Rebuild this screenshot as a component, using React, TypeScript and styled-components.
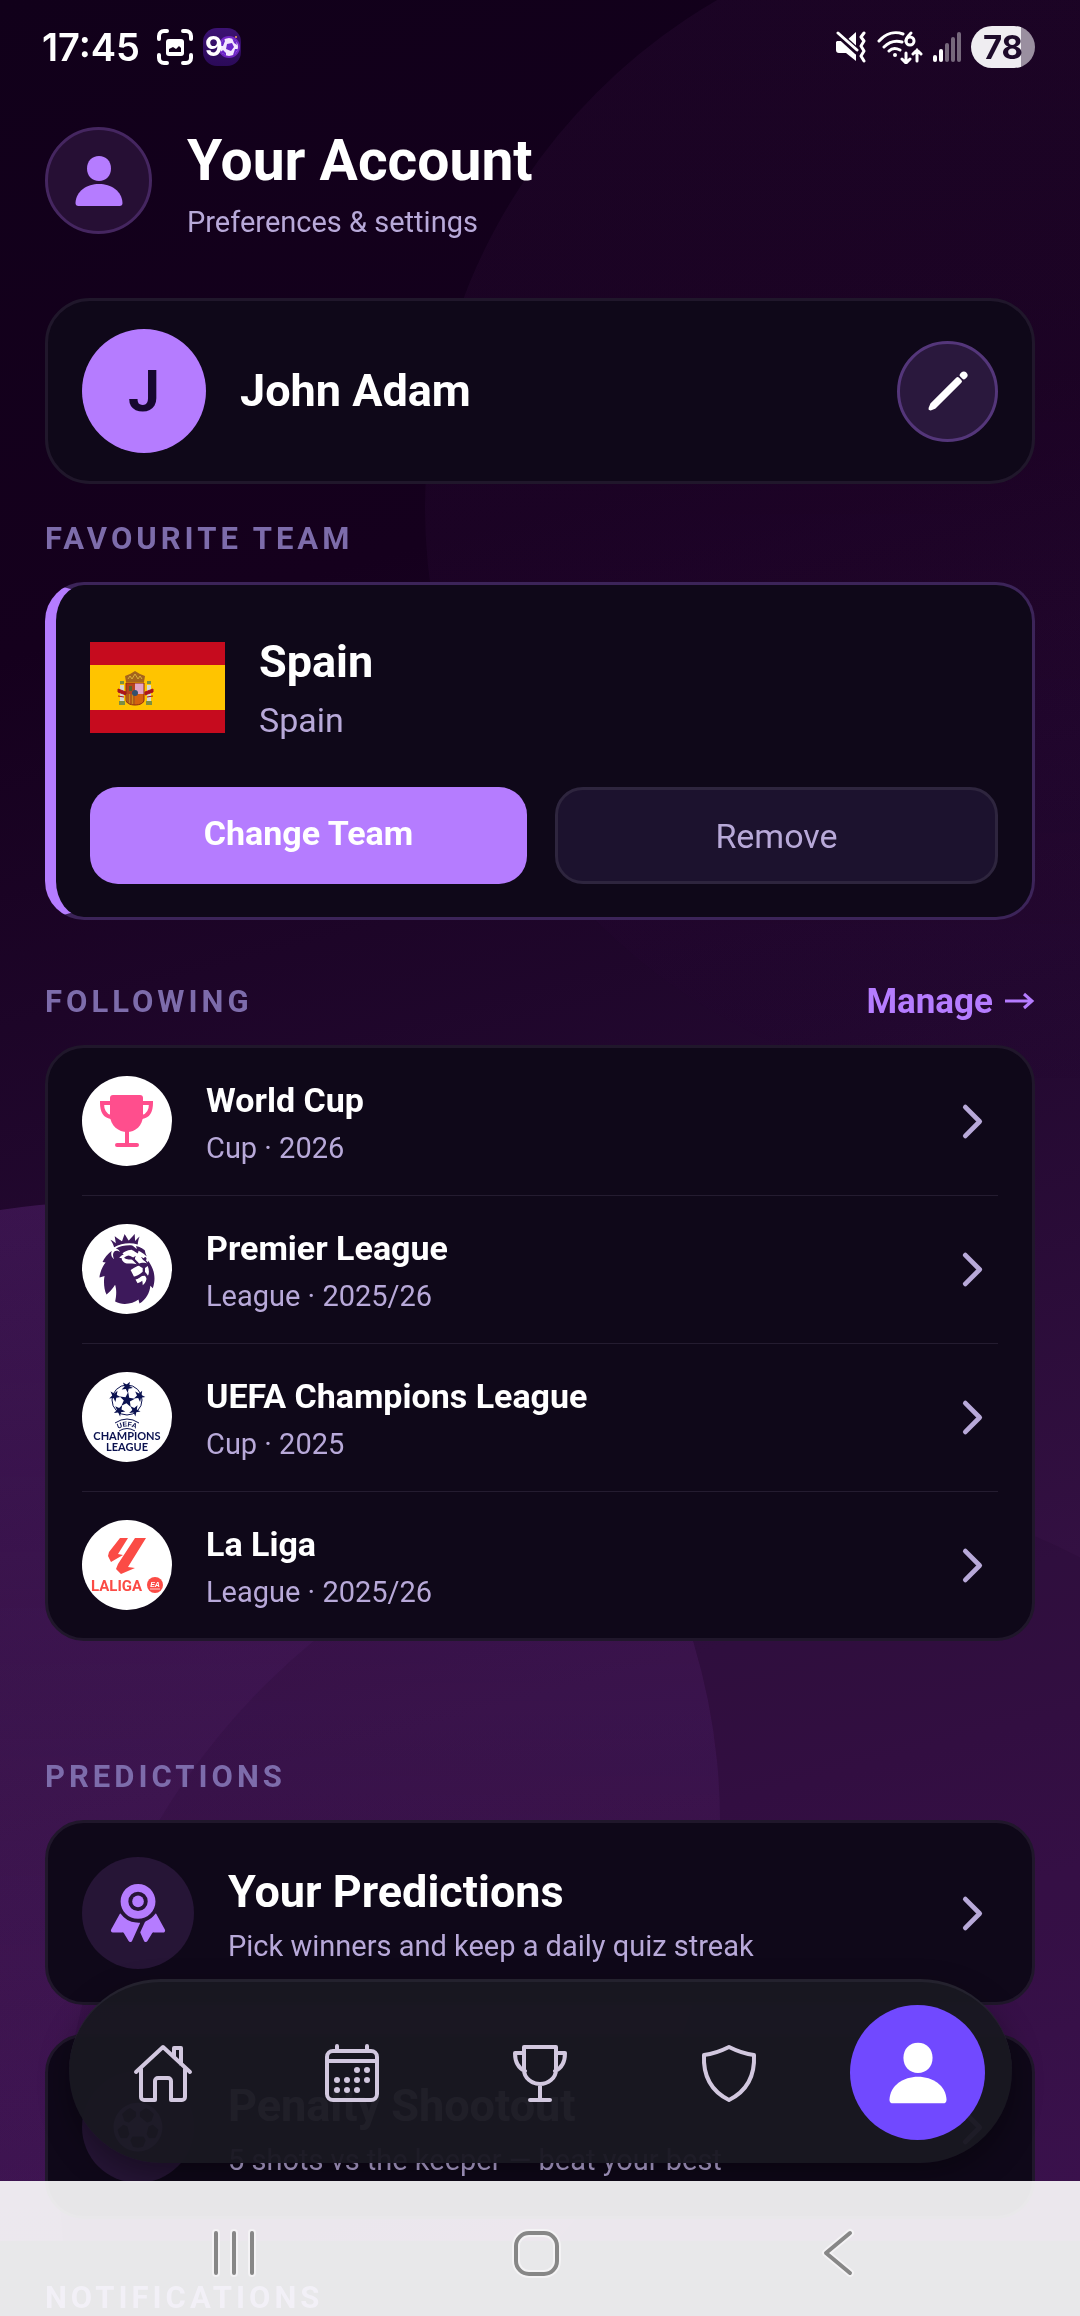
import React from 'react';
import { IoChevronForward, IoFootball, IoPencil, IoRibbon } from 'react-icons/io5';
import { SiPremierleague } from 'react-icons/si';
import styled, { createGlobalStyle } from 'styled-components';

interface Competition {
  name: string;
  detail: string;
  logo: React.ReactNode;
}

const competitions: Competition[] = [
  { name: 'World Cup', detail: 'Cup · 2026', logo: <CupLogo /> },
  { name: 'Premier League', detail: 'League · 2025/26', logo: <SiPremierleague size={70} color="#3d195b" /> },
  { name: 'UEFA Champions League', detail: 'Cup · 2025', logo: <ChampionsLogo /> },
  { name: 'La Liga', detail: 'League · 2025/26', logo: <LaLigaLogo /> },
];

const games = [
  { name: 'Your Predictions', detail: 'Pick winners and keep a daily quiz streak', icon: <IoRibbon size={62} /> },
  { name: 'Penalty Shootout', detail: '5 shots vs the keeper — beat your best', icon: <IoFootball size={60} /> },
];

const tabs = [
  { label: 'Home', icon: <HomeIcon /> },
  { label: 'Fixtures', icon: <CalendarIcon /> },
  { label: 'Competitions', icon: <TrophyIcon /> },
  { label: 'Teams', icon: <ShieldIcon /> },
  { label: 'Account', icon: <PersonIcon size={68} />, active: true },
];

export default function App() {
  return (
    <Page>
      <GlobalStyle />
      <Backdrop />
      <BottomShade />

      <StatusBar />

      <Content>
        <Header>
          <HeaderBadge><PersonIcon size={56} /></HeaderBadge>
          <div>
            <PageTitle>Your Account</PageTitle>
            <Detail>Preferences &amp; settings</Detail>
          </div>
        </Header>

        <ProfileCard>
          <Avatar>J</Avatar>
          <CardTitle>John Adam</CardTitle>
          <EditButton type="button" aria-label="Edit profile"><IoPencil size={48} /></EditButton>
        </ProfileCard>

        <SectionHead $space={36}>
          <SectionLabel>FAVOURITE TEAM</SectionLabel>
        </SectionHead>
        <TeamCard>
          <TeamRow>
            <SpainFlag />
            <div>
              <CardTitle>Spain</CardTitle>
              <TeamDetail>Spain</TeamDetail>
            </div>
          </TeamRow>
          <TeamActions>
            <PrimaryButton type="button">Change Team</PrimaryButton>
            <SecondaryButton type="button">Remove</SecondaryButton>
          </TeamActions>
        </TeamCard>

        <SectionHead $space={63}>
          <SectionLabel>FOLLOWING</SectionLabel>
          <ManageLink href="#manage">Manage <ArrowIcon /></ManageLink>
        </SectionHead>
        <ListCard>
          {competitions.map((item) => (
            <CompetitionRow key={item.name} href="#competition">
              <Logo>{item.logo}</Logo>
              <RowText>
                <RowTitle>{item.name}</RowTitle>
                <Detail>{item.detail}</Detail>
              </RowText>
              <IoChevronForward size={51} />
            </CompetitionRow>
          ))}
        </ListCard>

        <SectionHead $space={117}>
          <SectionLabel>PREDICTIONS</SectionLabel>
        </SectionHead>
        <GameList>
          {games.map((game) => (
            <GameCard key={game.name} href="#game">
              <GameIcon>{game.icon}</GameIcon>
              <RowText>
                <CardTitle>{game.name}</CardTitle>
                <Detail>{game.detail}</Detail>
              </RowText>
              <IoChevronForward size={51} />
            </GameCard>
          ))}
        </GameList>

        <SectionHead $space={60}>
          <SectionLabel>NOTIFICATIONS</SectionLabel>
        </SectionHead>
      </Content>

      <TabBar>
        {tabs.map((tab) => (
          <Tab key={tab.label} href="#tab" aria-label={tab.label}>
            <TabIcon $active={tab.active}>{tab.icon}</TabIcon>
          </Tab>
        ))}
      </TabBar>

      <SystemBar />
    </Page>
  );
}

function StatusBar() {
  return (
    <StatusRow>
      <Clock>17:45</Clock>
      <svg width="36" height="36" viewBox="0 0 36 36" fill="none" stroke="#fff" strokeWidth="4" strokeLinecap="round">
        <path d="M2 10V7a5 5 0 0 1 5-5h3M26 2h3a5 5 0 0 1 5 5v3M34 26v3a5 5 0 0 1-5 5h-3M10 34H7a5 5 0 0 1-5-5v-3" />
        <rect x="9" y="10" width="18" height="17" rx="3" fill="#fff" stroke="none" />
        <path d="M12 23v-3l4-2 3 2 3-3 2 2v4z" fill="#12001a" stroke="none" />
      </svg>
      <AppBadge>
        <svg width="38" height="38" viewBox="0 0 38 38">
          <circle cx="26" cy="19" r="11" fill="#9a35ff" opacity=".6" />
          <circle cx="26" cy="19" r="9" fill="#f3e6ff" />
          <path d="M24 16l5-1 2 4-3 4-5-2zM18 15l3-4 1 2-2 5h-2zM29 10l4 3 1 4-3-2zM20 22l3 3v3l-5-4zM32 21h3l-3 5-2 1z" fill="#6a25c9" />
          <circle cx="33" cy="9" r="1" fill="#f0a35a" />
          <text x="2" y="28" fontFamily="Inter, sans-serif" fontWeight="700" fontSize="27" fill="#fff">9</text>
        </svg>
      </AppBadge>
      <StatusSpacer />
      <svg width="32" height="32" viewBox="0 0 32 32">
        <path d="M2 10h9l10-9v29l-10-8H4a3 3 0 0 1-3-3v-8z" fill="#fff" />
        <path d="M1 1l22 20" stroke="#1a0422" strokeWidth="7" />
        <path d="M3 2l19 17" stroke="#fff" strokeWidth="3" strokeLinecap="round" />
        <path d="M29 2l-3 4 3 4-3 5 3 5-3 5 3 5" fill="none" stroke="#fff" strokeWidth="3" strokeLinecap="round" strokeLinejoin="round" />
      </svg>
      <svg width="46" height="34" viewBox="0 0 46 34" fill="none" stroke="#fff" strokeWidth="3" strokeLinecap="round">
        <path d="M2 11C9 3 18 1 26 4M7 17c5-5 11-7 18-5M12 21c3-3 7-3 11-1" />
        <circle cx="18" cy="25" r="2" fill="#fff" stroke="none" />
        <path d="M34 3c-3 3-5 5-5 8" />
        <circle cx="33" cy="11" r="4" />
        <path d="M29 23v10M25 29l4 4 4-4M40 31V20M36 24l4-4 4 4" />
      </svg>
      <svg width="28" height="30" viewBox="0 0 28 30" fill="#fff">
        <rect x="0" y="23" width="4" height="7" rx="2" />
        <rect x="6" y="17" width="4" height="13" rx="2" />
        <g opacity=".4">
          <rect x="12" y="11" width="4" height="19" rx="2" />
          <rect x="18" y="5" width="4" height="25" rx="2" />
          <rect x="24" y="0" width="4" height="30" rx="2" />
        </g>
      </svg>
      <Battery>78</Battery>
    </StatusRow>
  );
}

function SystemBar() {
  return (
    <SystemNav>
      <SystemButton type="button" aria-label="Recents">
        <SystemGlyph><path d="M10 5v40M28 5v40M46 5v40" /></SystemGlyph>
      </SystemButton>
      <SystemButton type="button" aria-label="Home">
        <SystemGlyph><rect x="8" y="5" width="41" height="41" rx="13" /></SystemGlyph>
      </SystemButton>
      <SystemButton type="button" aria-label="Back">
        <SystemGlyph><path d="M40 5L16 25l24 20" /></SystemGlyph>
      </SystemButton>
    </SystemNav>
  );
}

function SystemGlyph({ children }: { children: React.ReactNode }) {
  return (
    <svg width="56" height="50" viewBox="0 0 56 50" fill="none" strokeLinecap="round" strokeLinejoin="round">
      <g stroke="#f4f3f5" strokeWidth="8">{children}</g>
      <g stroke="#878787" strokeWidth="4">{children}</g>
    </svg>
  );
}

function Backdrop() {
  return (
    <BackdropLayer aria-hidden="true">
      <svg width="100%" height="100%" viewBox="0 0 1080 2316" preserveAspectRatio="none">
        <defs>
          <linearGradient id="topGlow" x1="0" y1="0" x2="0" y2="1">
            <stop offset="0" stopColor="#7d2d92" stopOpacity=".09" />
            <stop offset=".6" stopColor="#7d2d92" stopOpacity=".06" />
            <stop offset="1" stopColor="#7d2d92" stopOpacity="0" />
          </linearGradient>
          <linearGradient id="lowGlow" x1="0" y1="0" x2="0" y2="1">
            <stop offset="0" stopColor="#8a3cb4" stopOpacity=".24" />
            <stop offset=".5" stopColor="#8a3cb4" stopOpacity=".11" />
            <stop offset="1" stopColor="#8a3cb4" stopOpacity=".04" />
          </linearGradient>
        </defs>
        <circle cx="1011" cy="507" r="586" fill="url(#topGlow)" />
        <circle cx="100" cy="1822" r="620" fill="url(#lowGlow)" />
        <circle cx="760" cy="2180" r="700" fill="#1a0020" fillOpacity=".12" />
      </svg>
    </BackdropLayer>
  );
}

function ArrowIcon() {
  return (
    <svg width="32" height="18" viewBox="0 0 32 18" fill="none" stroke="currentColor" strokeWidth="3">
      <path d="M2 9h27M21 2l8 7-8 7" />
    </svg>
  );
}

function PersonIcon({ size }: { size: number }) {
  return (
    <svg width={size} height={size} viewBox="0 0 56 56" fill="currentColor">
      <path d="M28 3c7 0 12 5 12 12.500S35 28 28 28s-12-5-12-12.500S21 3 28 3z" />
      <path d="M28 31c12 0 23 7 23.500 19 0 2-1 3-3 3h-41c-2 0-3-1-3-3C5 38 16 31 28 31z" />
    </svg>
  );
}

function HomeIcon() {
  return (
    <LineSvg width="60" height="60" viewBox="0 0 60 60">
      <path d="M3 29L30 4l27 25M8 26v28a3 3 0 0 0 3 3h11V38a3 3 0 0 1 3-3h10a3 3 0 0 1 3 3v19h11a3 3 0 0 0 3-3V26M41 13V5h7v16" />
    </LineSvg>
  );
}

function CalendarIcon() {
  const dots = [[34, 27], [44, 27], [14, 37], [24, 37], [34, 37], [44, 37], [14, 47], [24, 47], [34, 47]];
  return (
    <LineSvg width="58" height="60" viewBox="0 0 58 60">
      <rect x="4" y="8" width="50" height="49" rx="6" />
      <path d="M4 18h50M14 3v4M44 3v4" />
      {dots.map(([x, y]) => <circle key={`${x}-${y}`} cx={x} cy={y} r="3" fill="currentColor" stroke="none" />)}
    </LineSvg>
  );
}

function TrophyIcon() {
  return (
    <LineSvg width="58" height="60" viewBox="0 0 58 60">
      <path d="M13 4h32v23c0 8-8 14-16 14s-16-6-16-14zM13 10H4c0 9 3 15 10 18M45 10h9c0 9-3 15-10 18M29 41v15M19 57h20" />
    </LineSvg>
  );
}

function ShieldIcon() {
  return (
    <LineSvg width="58" height="60" viewBox="0 0 58 60">
      <path d="M29 4c8 4 16 7 25 8 1 20-7 36-25 45C11 48 3 32 4 12c9-1 17-4 25-8z" />
    </LineSvg>
  );
}

function CupLogo() {
  return (
    <svg width="90" height="90" viewBox="0 0 90 90" fill="none" stroke="#ff4e8d" strokeWidth="4" strokeLinecap="round">
      <path d="M31 19h27a3 3 0 0 1 3 3v17c0 11-8 17-16 17s-17-6-17-17V22a3 3 0 0 1 3-3z" fill="#ff4e8d" stroke="none" />
      <path d="M28 27h-8c0 8 3 13 9 14M61 27h8c0 8-3 13-9 14M45 55v13M35 69h20" />
    </svg>
  );
}

function starPath(cx: number, cy: number, outer: number, turn: number) {
  const points = [];
  for (let i = 0; i < 10; i++) {
    const r = i % 2 ? outer * 0.4 : outer;
    const a = turn + (i * Math.PI) / 5;
    points.push(`${(cx + r * Math.sin(a)).toFixed(1)},${(cy - r * Math.cos(a)).toFixed(1)}`);
  }
  return `M${points.join('L')}Z`;
}

function ChampionsLogo() {
  const ring = [0, 1, 2, 3, 4].map((i) => (i * 2 * Math.PI) / 5);
  return (
    <svg width="90" height="90" viewBox="0 0 90 90" fill="#0b1250" fontWeight="700" textAnchor="middle">
      <circle cx="45" cy="28" r="15" fill="none" stroke="#0b1250" strokeWidth="1" />
      <path d={starPath(45, 28, 8, 0.15)} />
      {ring.map((a) => (
        <path key={a} d={starPath(45 + 13 * Math.sin(a), 28 - 13 * Math.cos(a), 6, a + 0.5)} />
      ))}
      <path id="uefaArc" d="M34 58Q45 51 56 58" fill="none" />
      <path d="M33 51Q45 43 57 51M37 59Q45 54 53 59" fill="none" stroke="#0b1250" strokeWidth="1" />
      <text fontFamily="Liberation Sans, sans-serif" fontSize="7">
        <textPath href="#uefaArc" startOffset="50%">UEFA</textPath>
      </text>
      <text x="45" y="68" fontFamily="Lato, sans-serif" fontSize="11">CHAMPIONS</text>
      <text x="45" y="79" fontFamily="Lato, sans-serif" fontSize="11">LEAGUE</text>
    </svg>
  );
}

function LaLigaLogo() {
  return (
    <svg width="90" height="90" viewBox="0 0 90 90" fill="#fb4b45" fontWeight="700">
      <path d="M38 18h8L36 34l5 1-12 7-3-6 1-4z" />
      <path d="M53 18h11L46 47l7 1-14 6-5-5 2-5z" />
      <text x="9" y="71" fontFamily="Roboto, sans-serif" fontSize="15">LALIGA</text>
      <circle cx="73" cy="65" r="8" />
      <text x="73" y="67" fontFamily="Liberation Sans, sans-serif" fontStyle="italic" fontSize="7" fill="#fff" textAnchor="middle">EA</text>
      <path d="M68 69h10" stroke="#fff" strokeWidth="1" opacity=".7" />
    </svg>
  );
}

function SpainFlag() {
  return (
    <svg width="135" height="91" viewBox="0 0 135 91" role="img" aria-label="Flag of Spain">
      <path d="M0 0h135v91H0z" fill="#c60b1e" />
      <path d="M0 23h135v45H0z" fill="#ffc400" />
      <path d="M30 43h4v16h-4zM57 43h4v16h-4z" fill="#d5d8d0" />
      <path d="M29 59h6v4h-6zM56 59h6v4h-6zM30 39h4v3h-4zM57 39h4v3h-4z" fill="#7c8f42" />
      <path d="M28 47l8 3v3l-8-3zM63 47l-8 3v3l8-3zM28 54l6 1M63 54l-6 1" fill="#ad1519" stroke="#ad1519" />
      <path d="M36 41h9v11h-9z" fill="#b8431d" />
      <path d="M45 41h9v11h-9z" fill="#e3a5c4" />
      <path d="M36 52h9v11c-5 0-9-2-9-5z" fill="#c98a1b" />
      <path d="M45 52h9v6c0 3-4 5-9 5z" fill="#d4610f" />
      <path d="M36 41h18v17c0 3-4 5-9 5s-9-2-9-5z" fill="none" stroke="#8d2a12" />
      <path d="M38 52v9M41 52v10M44 52v11" stroke="#9c2b12" />
      <path d="M39 44h3v5h-3z" fill="#54632b" />
      <circle cx="45" cy="51" r="3" fill="#35506e" />
      <path d="M36 40l-1-6 5-2 5-3 5 3 5 2-1 6z" fill="#a5641c" />
      <path d="M38 37l2-3 2 3 3-5 3 5 2-3 2 3" stroke="#d8b13a" fill="none" />
    </svg>
  );
}

const GlobalStyle = createGlobalStyle`
  * {
    box-sizing: border-box;
  }

  body {
    margin: 0;
    background: #12001a;
    color: #fff;
    font-family: Roboto, "Liberation Sans", sans-serif;
  }

  a {
    color: inherit;
    text-decoration: none;
  }

  button {
    font-family: inherit;
    cursor: pointer;
  }

  svg {
    display: block;
    flex-shrink: 0;
  }
`;

const Page = styled.div`
  position: relative;
  min-height: 100vh;
  overflow: hidden;
  background: linear-gradient(165deg, #11001a 0%, #15001d 25%, #22082f 48%, #331042 70%, #421556 100%);
`;

const BackdropLayer = styled.div`
  position: fixed;
  inset: 0;
`;

const BottomShade = styled.div`
  position: fixed;
  right: 0;
  bottom: 0;
  left: 0;
  height: 75px;
  background: #17162a;
`;

const StatusRow = styled.header`
  position: relative;
  display: flex;
  align-items: center;
  height: 94px;
  padding: 0 45px 0 42px;
`;

const Clock = styled.span`
  margin-right: 17px;
  font-family: Inter, sans-serif;
  font-size: 38px;
  font-weight: 600;
`;

const AppBadge = styled.span`
  margin-left: 10px;
  overflow: hidden;
  border-radius: 14px;
  background: linear-gradient(#3c1273, #2b0a58);
`;

const StatusSpacer = styled.span`
  flex: 1;

  & ~ svg {
    margin-right: 10px;
  }
`;

const Battery = styled.span`
  width: 64px;
  border-radius: 21px;
  background: linear-gradient(90deg, #efedf1 78%, #9a8fa0 78%);
  color: #1e0b2b;
  font-family: Inter, sans-serif;
  font-size: 33px;
  font-weight: 700;
  line-height: 42px;
  text-align: center;
`;

const Content = styled.main`
  position: relative;
  padding: 33px 45px 0;
`;

const Header = styled.div`
  display: flex;
  align-items: flex-start;
  gap: 35px;
  height: 171px;
`;

const Circle = styled.span`
  display: flex;
  flex-shrink: 0;
  align-items: center;
  justify-content: center;
  border-radius: 50%;
`;

const HeaderBadge = styled(Circle)`
  width: 107px;
  height: 107px;
  border: 3px solid #452660;
  background: #260f34;
  color: #b57cff;
`;

const PageTitle = styled.h1`
  margin: 0 0 10px;
  font-size: 57px;
  font-weight: 700;
  line-height: 68px;
`;

const CardTitle = styled.h2`
  margin: 0;
  font-size: 45px;
  font-weight: 700;
  line-height: 56px;
`;

const Detail = styled.p`
  margin: 0;
  color: #b8a9d9;
  font-size: 29px;
  line-height: 34px;
`;

const Card = styled.section`
  border: 3px solid #20172b;
  border-radius: 45px;
  background: #0f0819;
`;

const ProfileCard = styled(Card)`
  display: flex;
  align-items: center;
  gap: 34px;
  padding: 28px 34px;
`;

const Avatar = styled(Circle)`
  width: 124px;
  height: 124px;
  background: #b57cff;
  color: #170830;
  font-size: 57px;
  font-weight: 700;
`;

const EditButton = styled.button`
  display: flex;
  align-items: center;
  justify-content: center;
  width: 101px;
  height: 101px;
  margin-left: auto;
  padding: 0;
  border: 3px solid #54367a;
  border-radius: 50%;
  background: #2a183d;
  color: #fff;
`;

const SectionHead = styled.div<{ $space: number }>`
  display: flex;
  align-items: center;
  justify-content: space-between;
  height: 36px;
  margin-top: ${(props) => props.$space}px;
  margin-bottom: 26px;
`;

const SectionLabel = styled.h3`
  margin: 0;
  color: #7d6cab;
  font-size: 31px;
  font-weight: 700;
  letter-spacing: 4px;
`;

const ManageLink = styled.a`
  display: flex;
  align-items: center;
  gap: 10px;
  color: #b57cff;
  font-size: 35px;
  font-weight: 700;
`;

const TeamCard = styled(Card)`
  padding: 49px 34px 33px;
  border-color: #3c2459;
  border-left: 11px solid #b57cff;
  border-radius: 39px;
`;

const TeamRow = styled.div`
  display: flex;
  align-items: center;
  gap: 34px;
`;

const TeamDetail = styled(Detail)`
  margin-top: 10px;
  font-size: 34px;
  line-height: 40px;
`;

const TeamActions = styled.div`
  display: flex;
  gap: 28px;
  margin-top: 47px;
`;

const TeamButton = styled.button`
  flex: 1;
  height: 97px;
  border-radius: 28px;
  font-size: 34px;
`;

const PrimaryButton = styled(TeamButton)`
  border: 0;
  padding: 0 0 6px;
  background: #b57cff;
  color: #fff;
  font-weight: 700;
`;

const SecondaryButton = styled(TeamButton)`
  border: 3px solid #2e253e;
  padding: 0;
  background: #1c122e;
  color: #b8a9d9;
`;

const ListCard = styled(Card)`
  padding: 0 34px;
  border-radius: 39px;
  color: #b8a9d9;
`;

const CompetitionRow = styled.a`
  display: flex;
  align-items: center;
  gap: 34px;
  padding: 28px 0 29px;
  border-bottom: 1px solid #241c30;

  &:last-child {
    padding-bottom: 28px;
    border-bottom: 0;
  }
`;

const Logo = styled(Circle)`
  width: 90px;
  height: 90px;
  background: #fff;
`;

const RowText = styled.div`
  flex: 1;

  ${Detail} {
    margin-top: 9px;
  }
`;

const RowTitle = styled.h2`
  margin: 0;
  color: #fff;
  font-size: 34px;
  font-weight: 700;
  line-height: 44px;
`;

const GameList = styled.div`
  display: flex;
  flex-direction: column;
  gap: 29px;
`;

const GameCard = styled(Card).attrs({ as: 'a' })<{ href: string }>`
  display: flex;
  align-items: center;
  gap: 34px;
  padding: 34px 34px 33px;
  border-radius: 39px;
  color: #b8a9d9;

  ${CardTitle} {
    color: #fff;
  }
`;

const GameIcon = styled(Circle)`
  width: 112px;
  height: 112px;
  background: #261536;
  color: #b57cff;
`;

const TabBar = styled.nav`
  position: fixed;
  right: 68px;
  bottom: 153px;
  left: 69px;
  display: flex;
  align-items: center;
  height: 184px;
  border-top: 3px solid #24222e;
  border-radius: 92px;
  background: rgba(25, 24, 33, 0.97);
  box-shadow: 0 12px 30px rgba(0, 0, 0, 0.35);
`;

const Tab = styled.a`
  display: flex;
  flex: 1;
  justify-content: center;
`;

const TabIcon = styled(Circle)<{ $active?: boolean }>`
  width: 135px;
  height: 135px;
  background: ${(props) => (props.$active ? '#7149ff' : 'transparent')};
  color: ${(props) => (props.$active ? '#fff' : '#d2c8df')};
`;

const LineSvg = styled.svg`
  fill: none;
  stroke: currentColor;
  stroke-width: 4;
  stroke-linecap: round;
  stroke-linejoin: round;
`;

const SystemNav = styled.nav`
  position: fixed;
  right: 0;
  bottom: 0;
  left: 0;
  display: flex;
  align-items: center;
  justify-content: center;
  gap: 246px;
  height: 135px;
  padding: 8px 8px 0 0;
  background: rgba(255, 255, 255, 0.9);
`;

const SystemButton = styled.button`
  padding: 0;
  border: 0;
  background: none;
`;
